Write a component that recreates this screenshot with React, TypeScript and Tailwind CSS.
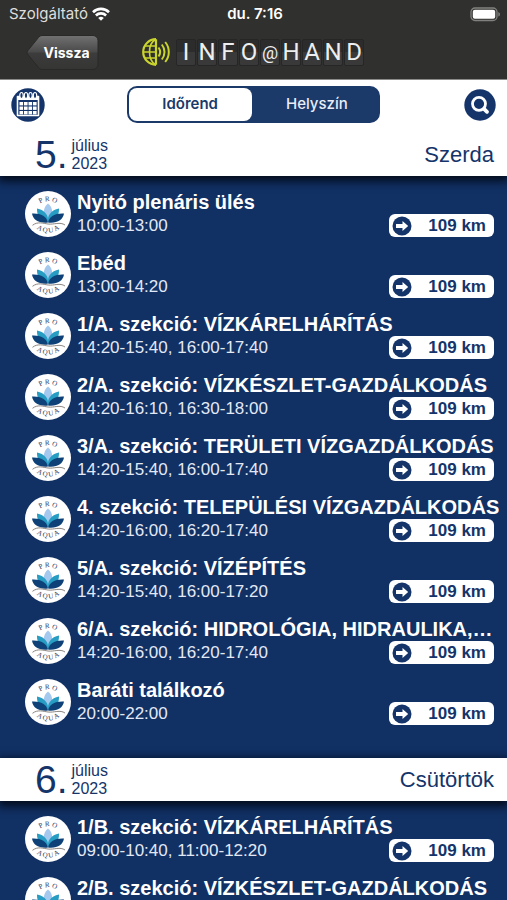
import { useId, useState } from "react";

type Session = { title: string; time: string };
type Day = { day: number; month: string; year: number; weekday: string; sessions: Session[] };

const days: Day[] = [
  {
    day: 5,
    month: "július",
    year: 2023,
    weekday: "Szerda",
    sessions: [
      { title: "Nyitó plenáris ülés", time: "10:00-13:00" },
      { title: "Ebéd", time: "13:00-14:20" },
      { title: "1/A. szekció: VÍZKÁRELHÁRÍTÁS", time: "14:20-15:40, 16:00-17:40" },
      { title: "2/A. szekció: VÍZKÉSZLET-GAZDÁLKODÁS", time: "14:20-16:10, 16:30-18:00" },
      { title: "3/A. szekció: TERÜLETI VÍZGAZDÁLKODÁS", time: "14:20-15:40, 16:00-17:40" },
      { title: "4. szekció: TELEPÜLÉSI VÍZGAZDÁLKODÁS", time: "14:20-16:00, 16:20-17:40" },
      { title: "5/A. szekció: VÍZÉPÍTÉS", time: "14:20-15:40, 16:00-17:20" },
      { title: "6/A. szekció: HIDROLÓGIA, HIDRAULIKA,…", time: "14:20-16:00, 16:20-17:40" },
      { title: "Baráti találkozó", time: "20:00-22:00" },
    ],
  },
  {
    day: 6,
    month: "július",
    year: 2023,
    weekday: "Csütörtök",
    sessions: [
      { title: "1/B. szekció: VÍZKÁRELHÁRÍTÁS", time: "09:00-10:40, 11:00-12:20" },
      { title: "2/B. szekció: VÍZKÉSZLET-GAZDÁLKODÁS", time: "09:00-10:40, 11:00-12:20" },
    ],
  },
];

function WifiIcon() {
  return (
    <svg viewBox="0 0 18 14" className="h-3.5 w-[18px]" fill="none" stroke="#fff" strokeWidth="2.6" aria-hidden="true">
      <path d="M1 5.200a11.400 11.400 0 0 1 16 0" />
      <path d="M3.900 8.500a7.300 7.300 0 0 1 10.200 0" />
      <path d="M9 13.800 6.200 11a4 4 0 0 1 5.600 0Z" fill="#fff" stroke="none" />
    </svg>
  );
}

function BatteryIcon() {
  return (
    <svg viewBox="0 0 31 15" className="h-[15px] w-[31px]" aria-hidden="true">
      <rect x="1" y="1" width="26" height="12.500" rx="4" fill="none" stroke="#81817f" strokeWidth="1.300" />
      <rect x="2.800" y="2.800" width="22.400" height="9" rx="2" fill="#fff" />
      <path d="M28.300 5c2.200.8 2.200 3.800 0 4.600Z" fill="#81817f" />
    </svg>
  );
}

function GlobeIcon() {
  return (
    <svg viewBox="0 0 30 30" className="h-[30px] w-[30px]" fill="none" stroke="#c9d42c" strokeWidth="1.600" aria-hidden="true">
      <path d="M15 2.200v25.600M15 2.200a12.800 12.800 0 0 0 0 25.600" strokeWidth="2.200" />
      <path d="M14.500 2.500C6.500 7 6.500 23 14.500 27.500M2.500 15H15M4 9h11M4 21h11" />
      <path d="M17.500 10.500c2 2.700 2 6.300 0 9M20.800 7.500c3.600 4.500 3.600 10.500 0 15M24.200 5c4.800 6 4.800 14 0 20" strokeWidth="2" />
    </svg>
  );
}

function CalendarIcon() {
  return (
    <svg viewBox="0 0 34 34" className="h-[34px] w-[34px]" aria-hidden="true">
      <circle cx="17" cy="17" r="16.700" fill="#14346a" />
      <path d="M6.500 8.500h21v19h-21Z" fill="none" stroke="#fff" strokeWidth="1.600" strokeLinejoin="round" />
      <path d="M6.500 8h21v4h-21Z" fill="#fff" />
      <g fill="#14346a" stroke="#fff" strokeWidth="1.200">
        <ellipse cx="10.500" cy="7.500" rx="1.700" ry="3" />
        <ellipse cx="15" cy="7.500" rx="1.700" ry="3" />
        <ellipse cx="19.500" cy="7.500" rx="1.700" ry="3" />
        <ellipse cx="24" cy="7.500" rx="1.700" ry="3" />
      </g>
      <g fill="#fff">
        {[14, 18.5, 23].map((y) =>
          [8.5, 13, 17.5, 22].map((x) => <rect key={`${x}-${y}`} x={x} y={y} width="3.600" height="3.400" />),
        )}
      </g>
    </svg>
  );
}

function SearchIcon() {
  return (
    <svg viewBox="0 0 32 32" className="h-8 w-8" aria-hidden="true">
      <circle cx="16" cy="16" r="15.700" fill="#14346a" />
      <circle cx="15" cy="14.800" r="6.500" fill="none" stroke="#fff" strokeWidth="2.800" />
      <path d="m20 19.800 3 3" stroke="#fff" strokeWidth="3.800" strokeLinecap="round" />
    </svg>
  );
}

function AquaLogo() {
  const id = useId();
  return (
    <svg viewBox="0 0 46 46" className="h-[46px] w-[46px] shrink-0" role="img" aria-label="Pro Aqua">
      <defs>
        <path id={`${id}-top`} d="M9 24a14 14 0 0 1 28 0" />
        <path id={`${id}-bottom`} d="M4 22.500a19 19 0 0 0 38 0" />
      </defs>
      <circle cx="23" cy="23" r="23" fill="#fff" />
      <g fill="#2f3b5e" fontFamily="Liberation Serif, serif" fontSize="7" textAnchor="middle">
        <text>
          <textPath href={`#${id}-top`} startOffset="50%">P R O</textPath>
        </text>
        <text>
          <textPath href={`#${id}-bottom`} startOffset="50%">A Q U A</textPath>
        </text>
      </g>
      <path d="M23 12.500c-5.500 4.500-5.500 11.500 0 17.500 5.500-6 5.500-13 0-17.500Z" fill="#a4c8ee" />
      <path d="M12 17.500c-.3 7 3 11.500 10.800 13.500 1.200-6.500-3-12-10.800-13.500ZM34 17.500c.3 7-3 11.500-10.800 13.500-1.200-6.500 3-12 10.800-13.500Z" fill="#279dc4" />
      <path d="M7 22.500c1 6.500 7 10 16 9-1.500-6.500-7.500-9.500-16-9ZM39 22.500c-1 6.500-7 10-16 9 1.500-6.500 7.500-9.500 16-9Z" fill="#0d4178" />
      <path d="M7.500 34.300c5-4 10.500-2 15.500-1.300 6 .8 12-2.500 17 1" fill="none" stroke="#8b8581" strokeWidth="1" />
    </svg>
  );
}

function ArrowIcon() {
  return (
    <svg viewBox="0 0 20 20" className="h-5 w-5" aria-hidden="true">
      <circle cx="10" cy="10" r="9.500" fill="#14346a" />
      <path d="M4 8h6.500V5l5.700 5-5.700 5v-3H4Z" fill="#fff" />
    </svg>
  );
}

function BackButton() {
  return (
    <button type="button" className="relative h-9 w-[73px] pl-2 font-['Inter',sans-serif] text-sm font-bold text-white">
      <svg viewBox="0 0 73 36" className="absolute inset-0 h-full w-full" aria-hidden="true">
        <defs>
          <linearGradient id="back-fill" x1="0" y1="0" x2="0" y2="1">
            <stop offset="0" stopColor="#727272" />
            <stop offset=".48" stopColor="#4a4a4a" />
            <stop offset=".52" stopColor="#3c3c3c" />
            <stop offset="1" stopColor="#353534" />
          </linearGradient>
        </defs>
        <path d="M16 .5h51a5 5 0 0 1 5 5v24a5 5 0 0 1-5 5H16q-2 0-3.500-2L1.500 19q-1-1.500 0-3L12.500 2.500Q14 .5 16 .5Z" fill="url(#back-fill)" stroke="#292928" />
      </svg>
      <span className="relative">Vissza</span>
    </button>
  );
}

function SessionRow({ session }: { session: Session }) {
  return (
    <li className="flex h-[61px] items-center gap-1.5">
      <AquaLogo />
      <div className="min-w-0 flex-1">
        <h3 className="truncate text-xl leading-6 font-bold">{session.title}</h3>
        <div className="flex h-[23px] items-center justify-between">
          <p className="text-[17px] leading-[23px] text-[#e3e9f4]">{session.time}</p>
          <button type="button" className="mr-[13px] flex h-[23px] w-[105px] items-center justify-between rounded-md bg-white pr-2 pl-[3px] text-[17px] leading-[23px] font-bold text-[#14346a]">
            <ArrowIcon />
            109 km
          </button>
        </div>
      </div>
    </li>
  );
}

function DaySection({ day }: { day: Day }) {
  return (
    <section>
      <header className="relative flex h-[43px] items-center justify-between bg-white pr-[13px] pl-[35px] text-[#14346a] shadow-[0_3px_9px_2px_#030a18]">
        <div className="flex items-center gap-1">
          <span className="text-[39px] leading-[43px]">{day.day}.</span>
          <span className="text-base leading-[18px]">
            {day.month}
            <br />
            {day.year}
          </span>
        </div>
        <h2 className="text-[22px]">{day.weekday}</h2>
      </header>
      <ul className="pt-[7px] pb-[26px] pl-[25px] text-white">
        {day.sessions.map((session) => (
          <SessionRow key={session.title} session={session} />
        ))}
      </ul>
    </section>
  );
}

export default function App() {
  const [view, setView] = useState("Időrend");
  return (
    <div className="flex h-screen flex-col bg-[#113064] font-['Liberation_Sans',Arial,sans-serif]">
      <div className="border-b border-[#8b8b8b] bg-[#30302e] text-white">
        <div className="grid h-7 grid-cols-3 items-center pr-1.5 pl-[9px] font-['Inter',sans-serif] text-[15px]">
          <div className="flex items-center gap-1 text-[#dededc]">
            Szolgáltató
            <WifiIcon />
          </div>
          <div className="text-center font-semibold">du. 7:16</div>
          <div className="flex justify-end">
            <BatteryIcon />
          </div>
        </div>
        <div className="flex h-[51px] items-start pt-[7px] pl-[26px]">
          <BackButton />
          <div className="ml-[42px] flex h-[34px] items-center gap-[5px]">
            <GlobeIcon />
            <h1 aria-label="INFO@HAND" className="flex gap-px">
              {[..."INFO@HAND"].map((letter, index) => (
                <span
                  key={index}
                  className="flex h-[27px] w-5 items-center justify-center rounded-xs border border-[#262626] bg-linear-to-b from-[#2c2c2c] from-50% to-[#393939] to-50% font-['Roboto',sans-serif] text-2xl leading-[27px] text-[#eeeeee] nth-5:text-lg nth-5:leading-[27px]"
                >
                  {letter}
                </span>
              ))}
            </h1>
          </div>
        </div>
      </div>
      <nav className="relative z-10 grid h-[53px] shrink-0 grid-cols-[1fr_50%_1fr] items-center bg-white pb-1">
        <button type="button" aria-label="Naptár" className="ml-[11px] justify-self-start">
          <CalendarIcon />
        </button>
        <div className="flex h-[37px] gap-1 rounded-[10px] border-2 border-[#1b3969] bg-[#1b3969] font-['Inter',sans-serif] text-[15px] font-medium">
          {["Időrend", "Helyszín"].map((label) => (
            <button
              key={label}
              type="button"
              aria-pressed={view === label}
              onClick={() => setView(label)}
              className={view === label ? "flex-1 rounded-lg bg-white font-semibold text-[#1b3969]" : "flex-1 rounded-lg text-[#e8edf6]"}
            >
              {label}
            </button>
          ))}
        </div>
        <button type="button" aria-label="Keresés" className="mr-[11px] justify-self-end">
          <SearchIcon />
        </button>
      </nav>
      <main className="min-h-0 flex-1 overflow-y-auto [scrollbar-width:none]">
        {days.map((day) => (
          <DaySection key={day.day} day={day} />
        ))}
      </main>
    </div>
  );
}
